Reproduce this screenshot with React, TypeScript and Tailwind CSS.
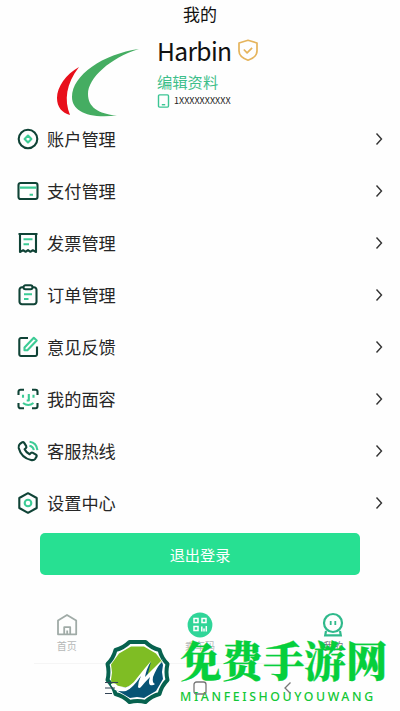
import React from "react";

const DARK = "#0f4336";
const MINT = "#3ccb95";

const AccountIcon = () => (
  <>
    <circle cx="11" cy="11" r="9.3" />
    <path stroke={MINT} d="M11 7.6 14.4 11 11 14.4 7.6 11Z" />
  </>
);

const CardIcon = () => (
  <>
    <rect x="1.5" y="3" width="19" height="16" rx="2" />
    <path stroke={MINT} d="M2.6 7.6h16.8M12.6 14.7h3.4" />
  </>
);

const InvoiceIcon = () => (
  <>
    <path d="M1.5 2h19M3 2v18l3.2-1.800 2.400 1.600 2.400-1.800 2.400 1.800 2.400-1.600 3.200 1.800V2" />
    <path stroke={MINT} d="M6.5 7.2h9M6.5 12.3h5.5" />
  </>
);

const OrderIcon = () => (
  <>
    <path d="M6.5 3.2H5a2.5 2.5 0 0 0-2.5 2.5v12A2.5 2.5 0 0 0 5 20.2h12a2.5 2.5 0 0 0 2.5-2.5v-12A2.5 2.5 0 0 0 17 3.2h-1.5" />
    <rect x="6.5" y="1.3" width="9" height="4" rx="2" />
    <path stroke={MINT} d="M7 10.2h8M7 15h4.5" />
  </>
);

const FeedbackIcon = () => (
  <>
    <path d="M11 2H4a1.7 1.7 0 0 0-1.7 1.7v14.6A1.7 1.7 0 0 0 4 20h14.3a1.7 1.7 0 0 0 1.7-1.7V10.5" />
    <path stroke={MINT} d="m7.5 11.5 9.3-9.7 2.9 2.8-9.3 9.7H7.5Z" />
  </>
);

const FaceIcon = () => (
  <>
    <path d="M7 1.7H3.5a2 2 0 0 0-2 2V7M15 1.7h3.5a2 2 0 0 1 2 2V7M7 20.3H3.5a2 2 0 0 1-2-2V15M15 20.3h3.5a2 2 0 0 0 2-2V15" />
    <path stroke={MINT} d="M6 6.8v3M16.5 6.8v3M11.8 6v6.5H9.7M6 15q5.2 4 10.5 0" />
  </>
);

const PhoneIcon = () => (
  <>
    <path d="M3 3.8 5 2.3q1.3-.7 2.2.6l2 3.2q.6 1.2-.4 2.1L7.6 9.3q1.7 3.5 5 5l1.3-1.3q.9-.8 2-.2l3 1.9q1.3.9.5 2.2l-1.2 1.9q-1.4 1.8-4.2 1.2C7.5 18.5 3.4 14.5 1.7 8q-.5-2.6 1.3-4.2Z" />
    <path stroke={MINT} d="M12.6 1.8q7 .8 7.8 8.4M12.4 5.7q3.8.6 4.4 4.5" />
  </>
);

const SettingsIcon = () => (
  <>
    <path d="m11 1.2 8.7 4.8v10L11 20.8 2.3 16V6Z" />
    <circle stroke={MINT} cx="11" cy="11" r="3.3" />
  </>
);

const menuItems = [
  { label: "账户管理", icon: AccountIcon },
  { label: "支付管理", icon: CardIcon },
  { label: "发票管理", icon: InvoiceIcon },
  { label: "订单管理", icon: OrderIcon },
  { label: "意见反馈", icon: FeedbackIcon },
  { label: "我的面容", icon: FaceIcon },
  { label: "客服热线", icon: PhoneIcon },
  { label: "设置中心", icon: SettingsIcon },
];

const Profile = () => (
  <section className="flex h-[85px]">
    <svg className="ml-[52px] h-[85px] w-[105px] shrink-0 overflow-visible" viewBox="52 28 105 85">
      <path fill="#e80f1b" d="M79 67C66 74 57 87 57 98c0 9 5 15 13 17-6-15-4-31 9-48Z" />
      <path fill="#45ad62" d="M139 49C103 54 72 75 72 97c0 14 16 22 45 18.5C98 114 88 107 88 94c0-16 22-36 51-45Z" />
    </svg>
    <div className="flex flex-col">
      <div className="mt-[7px] flex h-[31px] items-center">
        <h2 className="w-[75px] text-[24.6px] leading-[31px] tracking-[-0.65px] whitespace-nowrap text-[#111]">Harbin</h2>
        <svg className="ml-[5px] h-[23px] w-[22px]" viewBox="0 0 22 23" fill="none" stroke="#e5b45c" strokeWidth="1.7" strokeLinejoin="round">
          <path d="M11 1.3 20 4v8q0 6-9 9.2Q2 18 2 12V4Z" />
          <path d="m6.8 10.5 3.3 3.3 5-5" />
        </svg>
      </div>
      <a className="mt-[5px] h-[21px] text-[15.3px] leading-[21px] text-[#3dbe8a]">编辑资料</a>
      <div className="mt-[1px] flex h-4 items-center">
        <svg className="h-[14px] w-[13px]" viewBox="0 0 13 14" fill="none" stroke="#3cc594" strokeWidth="1.4">
          <rect x="1.5" y=".9" width="10" height="12.2" rx="1" />
          <path d="M4.8 10.7h3.4" />
        </svg>
        <span className="ml-1 text-[9px] leading-4 text-[#222]">1XXXXXXXXXX</span>
      </div>
    </div>
  </section>
);

const TabBar = () => (
  <nav className="mt-[35px] flex h-[54px] text-[10px] leading-[14px] text-[#b5b8b7]">
    <div className="flex flex-1 flex-col items-center pt-[2px]">
      <svg className="h-[26px] w-6" viewBox="0 0 24 26" fill="none" stroke="#a0aba7" strokeWidth="1.8" strokeLinejoin="round">
        <path d="M3 8.5 12 3l9.2 5.5V22.3H3Z" />
        <path d="M9.2 22v-6.8h6V22M12.2 18.5V22" />
      </svg>
      <span className="mt-px">首页</span>
    </div>
    <div className="flex flex-1 flex-col items-center pt-[2px]">
      <svg className="h-[26px] w-[26px]" viewBox="0 0 26 26" fill="none" stroke="white" strokeWidth="1.5">
        <circle cx="13" cy="13" r="12.4" fill="#2fd598" stroke="none" />
        <path d="M7 6.5h4v4H7ZM15 6.5h4v4h-4ZM7 14.5h4v4H7ZM14.8 14.5v5M17 16.5v3M19.3 14V19.5" />
      </svg>
      <span className="mt-px">乘车码</span>
    </div>
    <div className="flex flex-1 flex-col items-center pt-[2px]">
      <svg className="h-[26px] w-6" viewBox="0 0 24 26" fill="none" stroke="#2fb98b" strokeWidth="2.2">
        <circle cx="12" cy="11" r="9" />
        <path strokeWidth="1.8" d="M9.7 9v4M14.3 9v4" />
        <path d="M5 19 4.2 23.3h15.6L19 19" />
      </svg>
      <span className="mt-px text-[#777]">我的</span>
    </div>
  </nav>
);

const SystemBar = () => (
  <div className="relative z-10 mx-[34px] flex h-12 items-center pt-0.5 text-[#777]">
    <svg className="ml-[71px] h-4 w-4" viewBox="0 0 16 16" stroke="#345" strokeWidth="1">
      <path d="M0 2.5h13M0 8h10M0 13.5h7" />
    </svg>
    <svg className="ml-[71px] h-4 w-4" viewBox="0 0 16 16" fill="none" stroke="currentColor" strokeWidth="1.3">
      <rect x="2" y="2" width="12" height="12" rx="2.5" />
    </svg>
    <svg className="ml-[72px] h-4 w-4" viewBox="0 0 16 16" fill="none" stroke="currentColor" strokeWidth="1.3">
      <path d="M10.5 2.5 5 8l5.5 5.5" />
    </svg>
  </div>
);

const SiteBadge = () => (
  <div className="pointer-events-none absolute top-[638px] left-[103px] flex">
    <svg className="h-[68px] w-[68px]" viewBox="0 0 68 68">
      <path
        fill="white"
        stroke="#07624f"
        strokeWidth="4"
        strokeLinejoin="round"
        d="M26.5 4h16q6 6 14 8 2 8 8 14-2 8 0 16-6 6-8 14-8 2-14 8-8-2-16 0-6-6-14-8-2-8-8-14 2-8 0-16 6-6 8-14 8-2 14-8Z"
      />
      <path fill="#7fbd24" d="M28 8.500h13l12 7 6 8-14 15-22 11-14-3-1-5 1-7-1-8 8-11Z" />
      <path fill="#075475" d="m59 24 1 3-1 7 1 7-7 12-12 7-7-1-7 1-12-7-3-3q14 2 22-8l14-18-4 15Z" />
      <path fill="white" d="M8 46q4-2 6 1l2 3q11 1 18-10 7-9 14-17-5 9-6 16 9-9 18-18-7 10-10 18-1 6 2 7-2 2-5 1-2-2 0-8-5 5-9 10-2 2-3 0 0-5 3-11-9 13-15 15-6 1-11-1-3-3-4-5Z" />
    </svg>
    <div className="ml-[9px] flex w-[210px] flex-col">
      <span className="h-[43px] font-['Noto_Serif_CJK_SC','Noto_Sans_CJK_SC',serif] text-[41.5px] leading-[43px] font-black whitespace-nowrap text-[#06cf3c] [-webkit-text-stroke:0.3px_#06cf3c]">
        免费手游网
      </span>
      <span className="mt-[9px] font-['Noto_Sans',sans-serif] text-[12.3px] leading-[14px] font-medium tracking-[2.6px] whitespace-nowrap text-[#12c735]">
        MIANFEISHOUYOUWANG
      </span>
    </div>
  </div>
);

export default function App() {
  return (
    <div className="relative flex h-[711px] w-[400px] flex-col overflow-hidden bg-[#fefefe] font-['Noto_Sans_CJK_SC','Noto_Sans',sans-serif]">
      <header className="flex h-7 items-center justify-center text-[17px] leading-7 text-[#111]">我的</header>
      <Profile />
      <ul className="flex flex-col">
        {menuItems.map(({ label, icon: Icon }) => (
          <li key={label} className="flex h-[52px] items-center pr-[16px] pl-[17px]">
            <svg className="h-[22px] w-[22px]" viewBox="0 0 22 22" fill="none" stroke={DARK} strokeWidth="2.1" strokeLinejoin="round">
              <Icon />
            </svg>
            <span className="ml-2 text-[17.2px] leading-[26px] text-[#262626]">{label}</span>
            <svg className="ml-auto h-4 w-[10px]" viewBox="0 0 10 16" fill="none" stroke="#333" strokeWidth="1.4">
              <path d="m2.5 2.5 5 5.500-5 5.500" />
            </svg>
          </li>
        ))}
      </ul>
      <button className="mx-10 mt-1 h-[42px] shrink-0 rounded-[5px] bg-[#27e092] text-[15.2px] text-white">退出登录</button>
      <TabBar />
      <hr className="mx-[34px] border-[#f5f5f5]" />
      <SystemBar />
      <SiteBadge />
    </div>
  );
}
